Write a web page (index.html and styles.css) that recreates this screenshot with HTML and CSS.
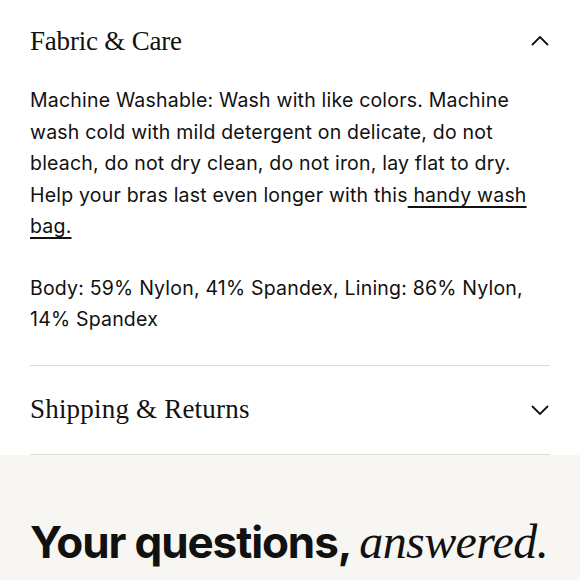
FILE: index.html
```html
<!DOCTYPE html>
<html>
<head>
<meta charset="utf-8">
<link rel="stylesheet" href="styles.css">
</head>
<body>
<div class="accordion">
  <section class="item open">
    <div class="item-head">
      <h2 class="item-title">Fabric &amp; Care</h2>
      <svg class="chev" width="18" height="10" viewBox="0 0 18 10"><path d="M1 9 L9 1 L17 9" fill="none" stroke="#111" stroke-width="1.8"/></svg>
    </div>
    <div class="item-body">
      <p>Machine Washable: Wash with like colors. Machine wash cold with mild detergent on delicate, do not bleach, do not dry clean, do not iron, lay flat to dry. Help your bras last even longer with this<a href="#"> handy wash bag.</a></p>
      <p>Body: 59% Nylon, 41% Spandex, Lining: 86% Nylon, 14% Spandex</p>
    </div>
  </section>
  <section class="item">
    <div class="item-head">
      <h2 class="item-title">Shipping &amp; Returns</h2>
      <svg class="chev" width="18" height="10" viewBox="0 0 18 10"><path d="M1 1 L9 9 L17 1" fill="none" stroke="#111" stroke-width="1.8"/></svg>
    </div>
  </section>
</div>
<section class="faq">
  <h1 class="faq-title">Your questions, <em>answered.</em></h1>
</section>
</body>
</html>
```
FILE: styles.css
```css
html, body {
  margin: 0;
  padding: 0;
  background: #fff;
}
body {
  color: #111;
  font-family: Inter, "Liberation Sans", sans-serif;
}
.accordion {
  padding: 0 30px;
}
.item {
  border-bottom: 1px solid #dcdcdc;
}
.item-head {
  display: flex;
  align-items: center;
  justify-content: space-between;
  height: 82px;
}
.item-title {
  margin: 0;
  font-family: "Liberation Serif", serif;
  font-weight: 400;
  font-size: 27px;
  letter-spacing: -0.2px;
}
.item:not(.open) .item-title {
  letter-spacing: 0.2px;
}
.chev {
  margin-right: 1px;
}
.item-body {
  padding: 3px 14px 29px 0;
}
.item-body p {
  margin: 0 0 30px;
  font-size: 19.5px;
  line-height: 31.5px;
  letter-spacing: 0.2px;
}
.item-body p:last-child {
  margin-bottom: 0;
}
.item-body a {
  color: inherit;
  text-decoration: underline;
  text-underline-offset: 4px;
  text-decoration-thickness: 1.5px;
  text-decoration-skip-ink: none;
}
.item:not(.open) .item-head {
  height: 88px;
}
.faq {
  background: #f7f6f3;
  padding: 63px 30px 40px;
}
.faq-title {
  margin: 0;
  font-size: 44px;
  line-height: 1;
  font-weight: 700;
  letter-spacing: -1.1px;
  white-space: nowrap;
}
.faq-title em {
  font-family: "Liberation Serif", serif;
  font-weight: 400;
  font-size: 48px;
  letter-spacing: -0.6px;
}
```
